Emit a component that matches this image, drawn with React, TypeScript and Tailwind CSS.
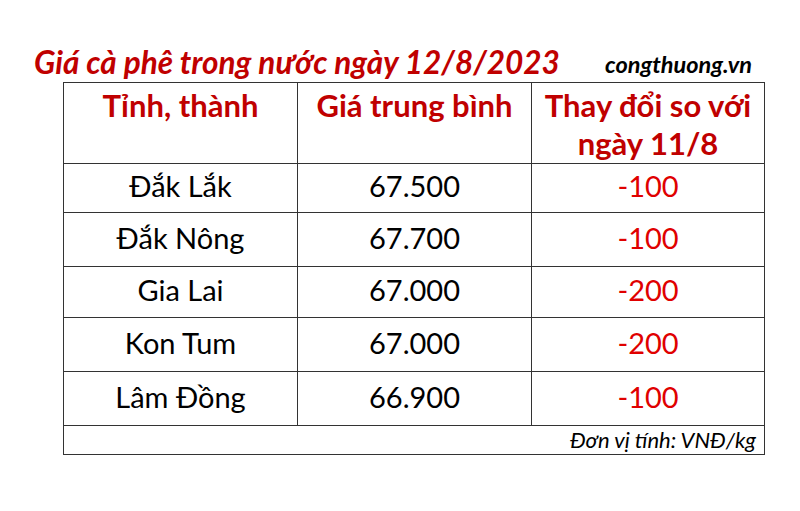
const rows = [
  { name: 'Đắk Lắk', price: '67.500', change: '-100', h: 'h-[49px]' },
  { name: 'Đắk Nông', price: '67.700', change: '-100', h: 'h-[54px]' },
  { name: 'Gia Lai', price: '67.000', change: '-200', h: 'h-[51px]' },
  { name: 'Kon Tum', price: '67.000', change: '-200', h: 'h-[54px]' },
  { name: 'Lâm Đồng', price: '66.900', change: '-100', h: 'h-[54px]' },
];

export default function App() {
  return (
    <div
      className="w-[800px] h-[511px] bg-white overflow-hidden"
      style={{ fontFamily: 'Lato, "Noto Sans", sans-serif' }}
    >
      {/* Title */}
      <div className="flex items-end h-[82px] pl-[34px] pb-[4px]">
        <h1 className="text-[31.5px] leading-none font-bold italic text-[#c00000] w-[571px]">
          Giá cà phê trong nước ngày 12/8/2023
        </h1>
        <span className="text-[23.5px] leading-none font-bold italic text-black mb-[2px]">
          congthuong.vn
        </span>
      </div>

      {/* Table */}
      <div className="ml-[63px] w-[702px] border border-[#333]">
        <div className="grid grid-cols-[234px_234px_1fr] h-[81px] border-b border-[#333] text-[31px] font-bold text-[#c00000] leading-[38px] text-center">
          <div className="border-r border-[#333] pt-[3px]">Tỉnh, thành</div>
          <div className="border-r border-[#333] pt-[3px]">Giá trung bình</div>
          <div className="pt-[3px]">
            Thay đổi so với
            <br />
            ngày 11/8
          </div>
        </div>

        {rows.map((r) => (
          <div
            key={r.name}
            className={`grid grid-cols-[234px_234px_1fr] ${r.h} border-b border-[#333] text-[29px] text-center`}
          >
            <div className="border-r border-[#333] flex items-center justify-center pb-[4px] text-black">
              {r.name}
            </div>
            <div className="border-r border-[#333] flex items-center justify-center pb-[4px] text-black">
              {r.price}
            </div>
            <div className="flex items-center justify-center pb-[4px] text-[#e00000]">{r.change}</div>
          </div>
        ))}

        <div className="h-[28px] flex items-center justify-end pr-[8px] text-[22px] leading-none italic text-black">
          Đơn vị tính: VNĐ/kg
        </div>
      </div>
    </div>
  );
}
